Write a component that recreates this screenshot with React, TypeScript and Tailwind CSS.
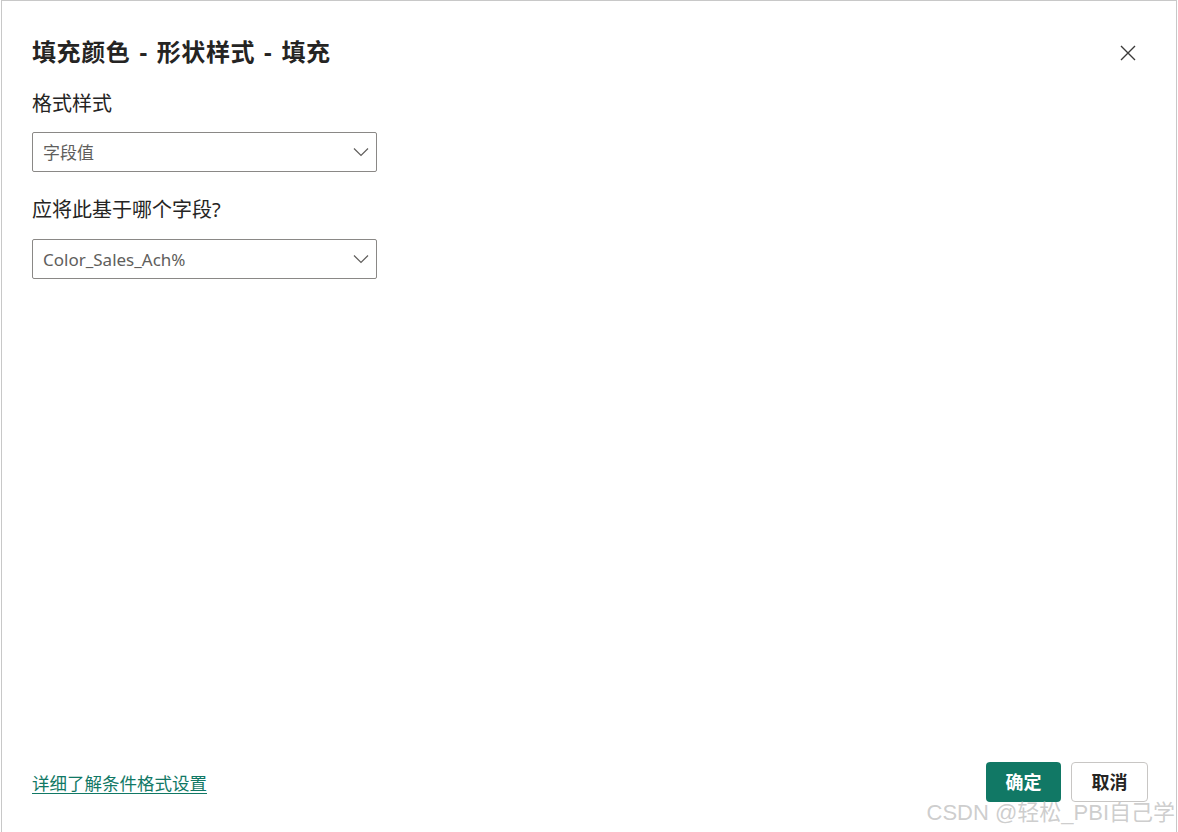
import React from "react";

const font = { fontFamily: '"Noto Sans", "Noto Sans CJK SC", sans-serif' };

function Chevron() {
  return (
    <svg width="16" height="10" viewBox="0 0 16 10" fill="none">
      <path d="M1 1.5 L8 8.5 L15 1.5" stroke="#605e5c" strokeWidth="1.2" />
    </svg>
  );
}

function Select({ value }: { value: string }) {
  return (
    <div className="flex h-[40px] w-[345px] items-center justify-between rounded-[2px] border border-[#8a8886] pl-[10px] pr-[7px]">
      <span className="text-[17px] leading-none text-[#605e5c]">{value}</span>
      <Chevron />
    </div>
  );
}

export default function App() {
  return (
    <div className="relative h-[832px] w-[1178px] overflow-hidden bg-white" style={font}>
      <div className="ml-[1px] flex h-[832px] w-[1176px] flex-col border-l border-r border-t border-[#c8c8c8] pb-[30px] pl-[30px] pr-[28px] pt-[35px]">
        <div className="flex h-[32px] items-center justify-between">
          <h1 className="text-[24px] font-bold leading-[32px] tracking-[0.6px] text-[#252423]">
            填充颜色<span className="mx-[9px]">-</span>形状样式<span className="mx-[9px]">-</span>填充
          </h1>
          <svg className="mr-[11px] mt-[2px]" width="18" height="18" viewBox="0 0 18 18" fill="none">
            <path d="M2 2 L16 16 M16 2 L2 16" stroke="#3b3a39" strokeWidth="1.4" />
          </svg>
        </div>
        <div className="mt-[22px] text-[20px] leading-[28px] text-[#252423]">格式样式</div>
        <div className="mt-[14px]">
          <Select value="字段值" />
        </div>
        <div className="mt-[24px] text-[20px] leading-[28px] text-[#252423]">应将此基于哪个字段?</div>
        <div className="mt-[15px]">
          <Select value="Color_Sales_Ach%" />
        </div>
        <div className="flex-1" />
        <div className="flex items-center justify-between">
          <a className="mt-[2px] text-[17.5px] leading-[24px] text-[#117865] underline underline-offset-[3px]">详细了解条件格式设置</a>
          <div className="flex gap-[10px]">
            <button className="h-[40px] w-[75px] rounded-[4px] bg-[#117865] text-[18px] font-bold text-white">确定</button>
            <button className="h-[40px] w-[77px] rounded-[4px] border border-[#c8c6c4] bg-white text-[18px] font-bold text-[#252423]">取消</button>
          </div>
        </div>
      </div>
      <div
        className="absolute bottom-[6px] right-[3px] text-[22px] leading-[26px] text-[#c8c8c8]/90"
        style={{ fontFamily: '"Liberation Sans", "Noto Sans CJK SC", sans-serif' }}
      >
        CSDN @轻松_PBI自己学
      </div>
    </div>
  );
}
